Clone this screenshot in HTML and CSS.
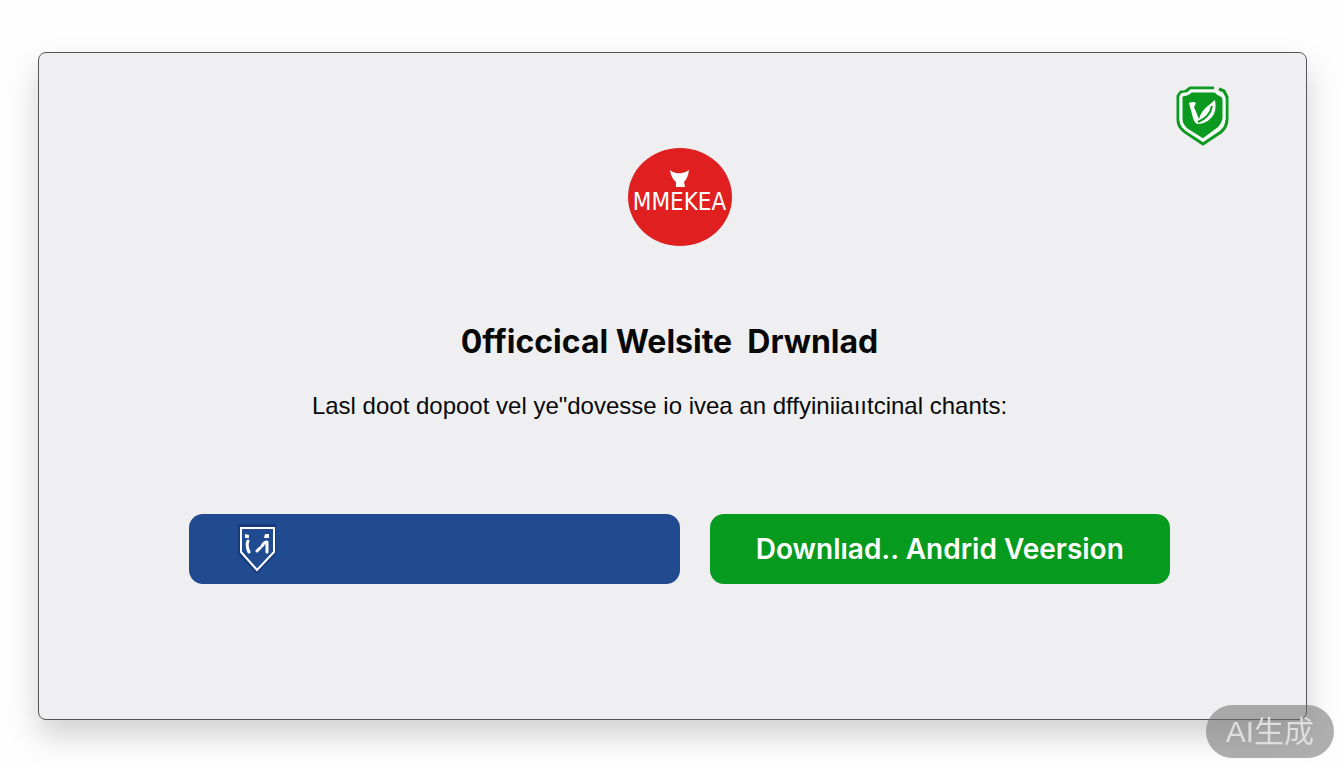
FILE: index.html
```html
<!DOCTYPE html>
<html lang="en">
<head>
  <meta charset="UTF-8">
  <meta name="viewport" content="width=device-width, initial-scale=1">
  <title>0fficcical Welsite Drwnlad</title>
  <link rel="stylesheet" href="styles.css">
</head>
<body>

<main class="card">
  <svg class="shield" viewBox="0 0 54 60" aria-hidden="true">
    <path fill="#0b9a1f" d="M7 5L12 3V9L5 11V35Q6 41 11 44L27 54L42 43Q47 39 48 32V14Q48 11 44 10L39 6H15L9 9Z"/>
    <path fill="none" stroke="#0b9a1f" stroke-width="3" stroke-linejoin="round" d="M38 2H14L9 6H5L2 10V34Q2 41 9 46L27 58L45 46Q51 41 51 33V11L48 5L43 3"/>
    <path fill="none" stroke="#f4faf4" stroke-width="3" stroke-linejoin="round" d="M5 11Q5 8 9 8Q13 8 15 5H39Q42 8 45 9Q48 10 48 14V32Q47 39 42 43L27 54L11 44Q5 39 5 33Z"/>
    <path fill="#fff" d="M13 17Q17 15 20 17L18 21L23 33Q25 25 33 19L39 14Q41 25 36 31Q30 38 22 38Q19 38 17 32Z"/>
    <path fill="none" stroke="#0b9a1f" stroke-width="2" d="M22 36Q34 31 36 20"/>
  </svg>

  <div class="logo">
    <svg class="logo-mark" viewBox="0 0 20 18" aria-hidden="true">
      <path fill="#fff" d="M0 0Q4 4 9 3Q14 4 19 0Q18 8 14 12L15 17H6V12Q1 8 0 0Z"/>
    </svg>
    <span class="logo-name">MMEKEA</span>
  </div>

  <h1>0fficcical Welsite &nbsp;Drwnlad</h1>
  <p class="subtitle">Lasl doot dopoot vel ye"dovesse io ivea an dffyiniiaııtcinal chants:</p>

  <div class="actions">
    <button type="button" class="btn btn-blue" aria-label="Download">
      <svg class="badge" viewBox="0 0 40 50" aria-hidden="true">
        <path fill="#173a7a" d="M1 0H39V30L20 50L1 30Z"/>
        <path fill="#204b90" stroke="#fff" stroke-width="2" d="M4 4H37V28L20 46L4 28Z"/>
        <path fill="#fff" d="M8 10L12 11V14H8ZM28 10H32V14H27Z"/>
        <path fill="none" stroke="#fff" stroke-width="3" stroke-linejoin="round" stroke-linecap="round" d="M11 17Q9 22 12 28M20 27L23 24M25 22Q27 18 30 18V28"/>
      </svg>
    </button>
    <button type="button" class="btn btn-green">Downlıad.. Andrid Veersion</button>
  </div>
</main>

<div class="watermark">AI生成</div>

</body>
</html>
```

FILE: styles.css
```css
* {
  box-sizing: border-box;
}
body {
  margin: 0;
  padding: 52px 37px 48px 38px;
  min-height: 100vh;
  display: flex;
  background: #fefefe;
  color: #080808;
  font-family: "Liberation Sans", Arial, sans-serif;
}
.card {
  position: relative;
  flex: 1;
  display: flex;
  flex-direction: column;
  align-items: center;
  padding: 95px 136px 96px 150px;
  background: #efeff1;
  border: 1px solid #555;
  border-radius: 8px;
  box-shadow: 0 16px 32px rgba(0,0,0,0.18);
}
.shield {
  position: absolute;
  top: 33px;
  right: 76px;
  width: 54px;
  height: 60px;
}
.logo {
  width: 104px;
  height: 98px;
  padding-top: 22px;
  display: flex;
  flex-direction: column;
  align-items: center;
  background: #df1f20;
  border-radius: 50%;
}
.logo-mark {
  width: 20px;
  height: 18px;
}
.logo-name {
  color: #fff;
  font-family: "Liberation Sans Narrow", "DejaVu Sans Condensed", sans-serif;
  font-size: 24px;
  line-height: 28px;
}
h1 {
  margin: 76px 20px 0 0;
  font-family: Inter, sans-serif;
  font-size: 32px;
  line-height: 40px;
  font-weight: 700;
  white-space: nowrap;
}
.subtitle {
  margin: 28px 40px 0 0;
  font-size: 24px;
  line-height: 32px;
  white-space: nowrap;
}
.actions {
  width: 100%;
  margin-top: 92px;
  display: grid;
  grid-template-columns: 49fr 46fr;
  gap: 30px;
}
.btn {
  height: 70px;
  padding: 0 24px;
  display: flex;
  align-items: center;
  border: none;
  border-radius: 14px;
  color: #fff;
  font-family: Inter, sans-serif;
  font-size: 28px;
  font-weight: 600;
  white-space: nowrap;
  cursor: pointer;
}
.btn-blue {
  padding-left: 48px;
  background: #204b90;
}
.btn-green {
  justify-content: center;
  background: #069b1e;
}
.badge {
  width: 40px;
  height: 50px;
}
.watermark {
  position: fixed;
  right: 10px;
  bottom: 10px;
  padding: 0 20px;
  border-radius: 27px;
  background: rgba(110,110,110,0.55);
  color: #dedede;
  font-family: "Liberation Sans", "Noto Sans CJK SC", sans-serif;
  font-size: 30px;
  line-height: 53px;
}
```
